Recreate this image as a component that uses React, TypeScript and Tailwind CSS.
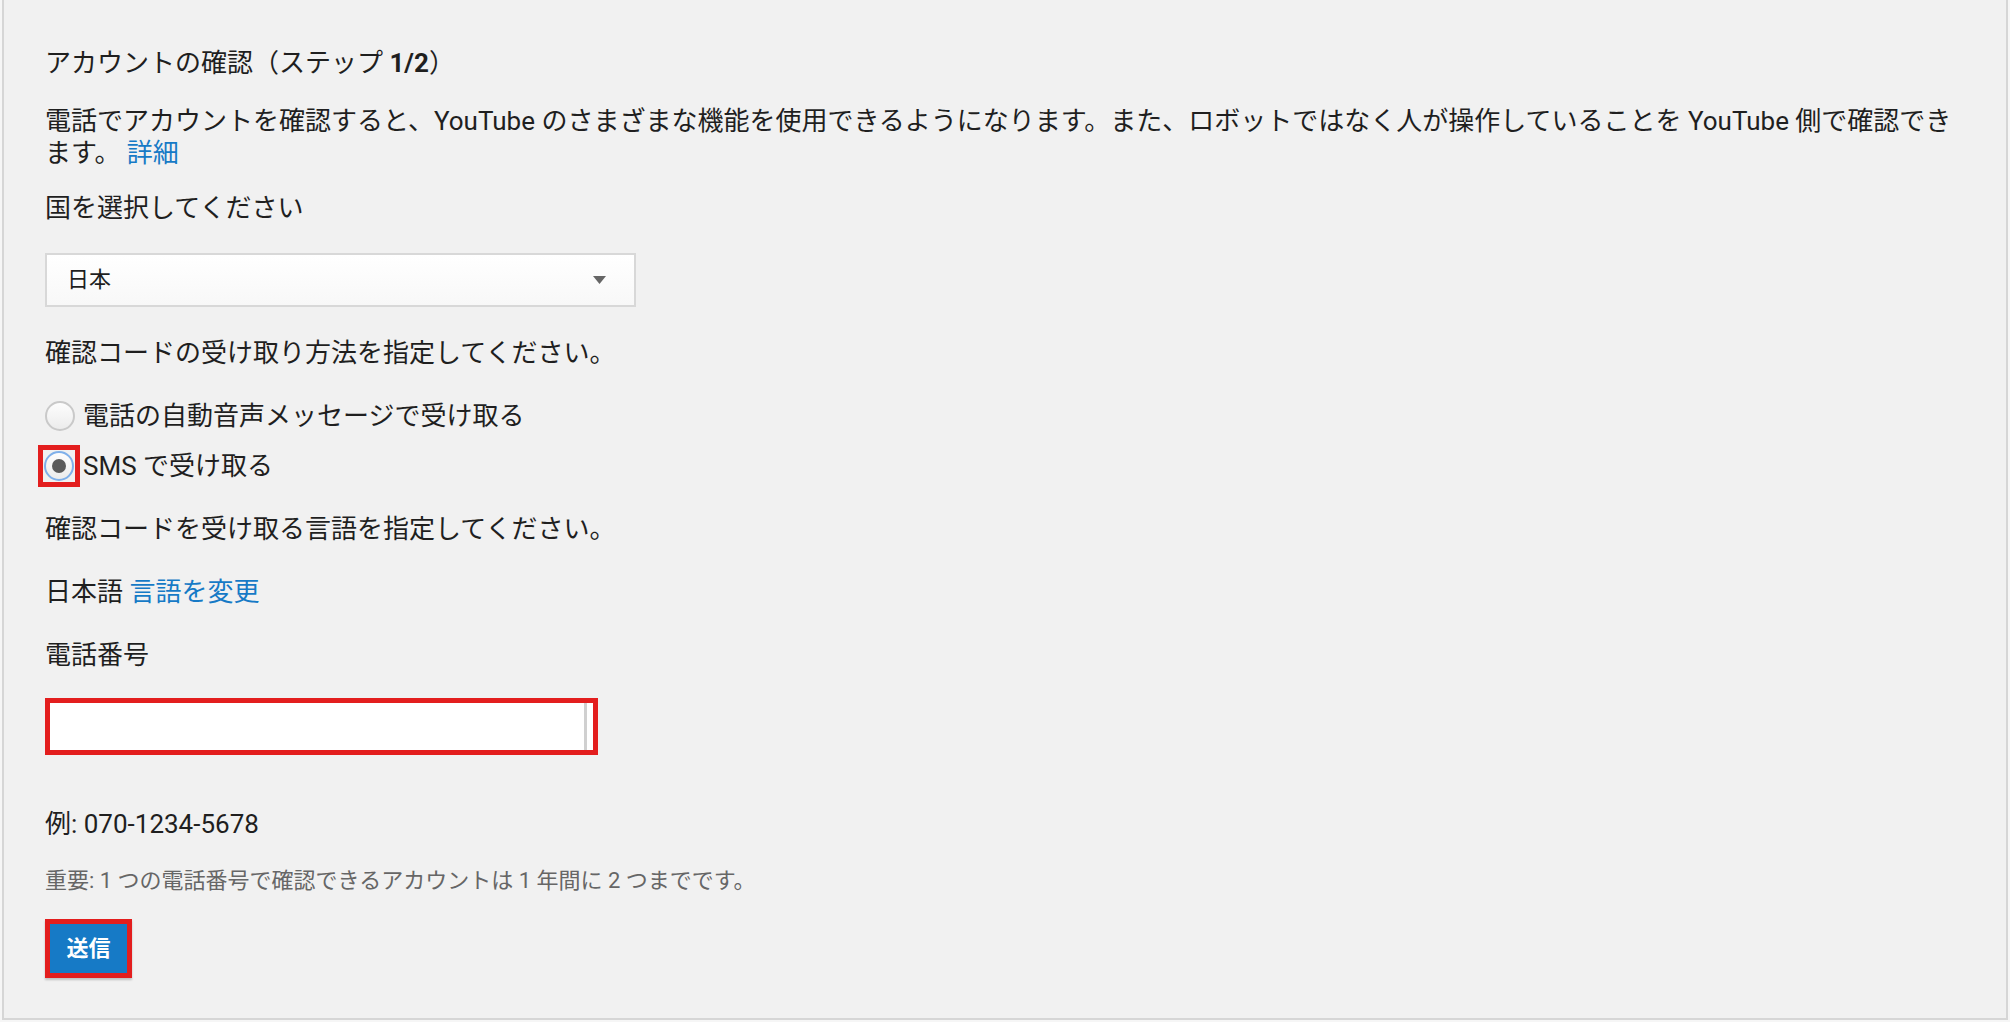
import React from 'react';

const FONT = 'font-[Roboto,"Noto_Sans_CJK_JP",sans-serif]';

function Radio({ checked }: { checked?: boolean }) {
    return (
        <span
            className={`flex h-[30px] w-[30px] shrink-0 items-center justify-center rounded-full border-2 bg-gradient-to-b from-[#fdfdfd] to-[#ececec] ${
                checked ? 'border-[#7fb0ea]' : 'border-[#c9c9c9]'
            }`}
        >
            {checked && <span className="h-[14px] w-[14px] rounded-full bg-[#5a5a5a]" />}
        </span>
    );
}

export default function App() {
    return (
        <div className={`h-[1022px] w-[2010px] overflow-hidden bg-[#f6f6f6] ${FONT}`}>
            <div className="ml-[2px] h-[1020px] w-[2006px] border-r-2 border-b-2 border-l-2 border-[#d6d6d6] bg-[#f1f1f1] pt-[47px] pl-[41px] text-[26px] leading-[32px] text-[#1f1f1f]">
                <div>
                    アカウントの確認（ステップ <span className="font-bold">1/2</span>）
                </div>

                <p className="mt-[26px]">
                    電話でアカウントを確認すると、YouTube のさまざまな機能を使用できるようになります。また、ロボットではなく人が操作していることを YouTube 側で確認でき
                    <br />
                    ます。 <a className="text-[#167ac6]">詳細</a>
                </p>

                <div className="mt-[23px]">国を選択してください</div>

                <div className="mt-[29px] flex h-[54px] w-[591px] items-center justify-between border-2 border-[#d8d8d8] bg-gradient-to-b from-white to-[#f8f8f8] pr-[28px] pl-[20px] text-[22px]">
                    <span>日本</span>
                    <svg width="13" height="8" viewBox="0 0 13 8">
                        <path d="M0 0h13L6.5 8z" fill="#666" />
                    </svg>
                </div>

                <div className="mt-[30px]">確認コードの受け取り方法を指定してください。</div>

                <label className="mt-[31px] flex h-[32px] items-center gap-[8px]">
                    <Radio />
                    <span>電話の自動音声メッセージで受け取る</span>
                </label>
                <label className="mt-[18px] -ml-[7px] flex h-[32px] items-center gap-[3px]">
                    <span className="flex h-[42px] w-[42px] items-center justify-center border-[5px] border-[#e31e1e]">
                        <Radio checked />
                    </span>
                    <span>SMS で受け取る</span>
                </label>

                <div className="mt-[31px]">確認コードを受け取る言語を指定してください。</div>

                <div className="mt-[31px]">
                    日本語 <a className="text-[#167ac6]">言語を変更</a>
                </div>

                <div className="mt-[31px]">電話番号</div>

                <div className="mt-[27px] flex h-[57px] w-[553px] border-[5px] border-[#e31e1e] bg-white">
                    <input className="h-full flex-1 border-r-[3px] border-[#d0d0d0] bg-white outline-none" />
                    <span className="w-[6px] bg-white" />
                </div>

                <div className="mt-[53px]">例: 070-1234-5678</div>

                <div className="mt-[27px] text-[22px] leading-[28px] text-[#666]">
                    重要: 1 つの電話番号で確認できるアカウントは 1 年間に 2 つまでです。
                </div>

                <div className="mt-[24px] h-[59px] w-[87px] border-[5px] border-[#e31e1e] shadow-[0_2px_2px_rgba(0,0,0,0.2)]">
                    <button className="flex h-full w-full items-center justify-center bg-[#167ac6] text-[22px] font-bold text-white">
                        送信
                    </button>
                </div>
            </div>
        </div>
    );
}
